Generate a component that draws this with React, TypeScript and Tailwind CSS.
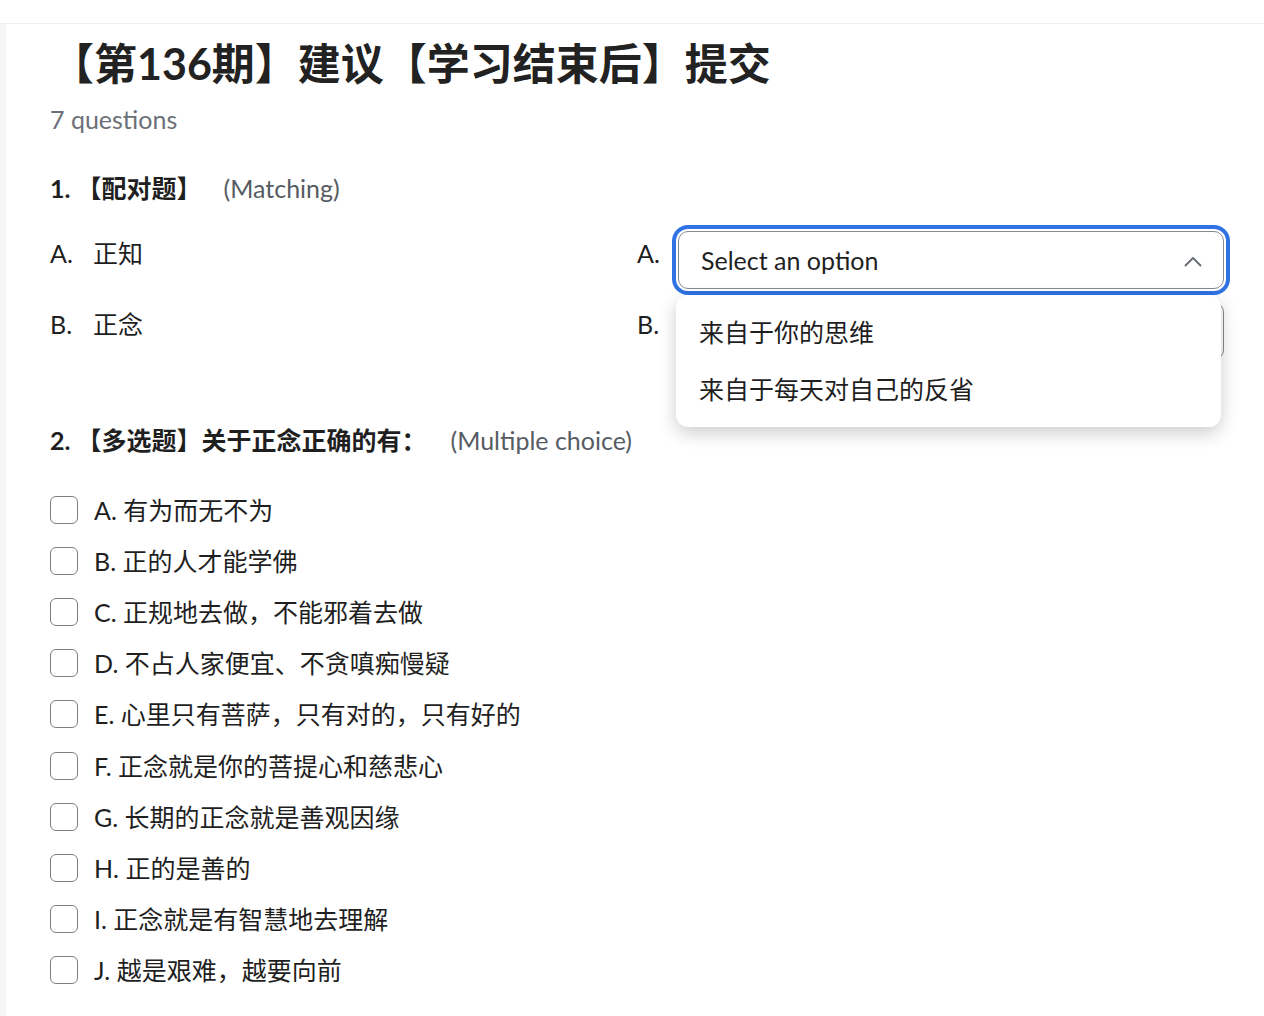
const font = { fontFamily: 'Lato, "Noto Sans CJK SC", sans-serif' };

const choices = [
  "A. 有为而无不为",
  "B. 正的人才能学佛",
  "C. 正规地去做，不能邪着去做",
  "D. 不占人家便宜、不贪嗔痴慢疑",
  "E. 心里只有菩萨，只有对的，只有好的",
  "F. 正念就是你的菩提心和慈悲心",
  "G. 长期的正念就是善观因缘",
  "H. 正的是善的",
  "I. 正念就是有智慧地去理解",
  "J. 越是艰难，越要向前",
];

function ChevronUp() {
  return (
    <svg width="18" height="11" viewBox="0 0 18 11" fill="none">
      <polyline
        points="1.5,9.5 9,2 16.5,9.5"
        stroke="#6b7078"
        strokeWidth="2"
        strokeLinecap="round"
        strokeLinejoin="round"
      />
    </svg>
  );
}

function SelectBox({ open }: { open?: boolean }) {
  return (
    <div className="relative">
      <div
        className={
          "flex h-[58px] w-[546px] items-center justify-between rounded-[10px] border border-[#868b93] bg-white pl-[22px] pr-[21px] pt-[2px] text-[25px] text-[#1f1f1f] " +
          (open ? "shadow-[0_0_0_2px_#ffffff,0_0_0_6px_#3072e3]" : "")
        }
      >
        <span>Select an option</span>
        {open ? <ChevronUp /> : null}
      </div>
      {open ? (
        <div className="absolute left-[-2px] top-[64px] z-10 w-[545px] rounded-[12px] bg-white py-[9px] shadow-[0_6px_18px_rgba(0,0,0,0.2)]">
          <div className="flex h-[57px] items-center px-[23px] text-[25px] text-[#1f1f1f]">
            来自于你的思维
          </div>
          <div className="flex h-[57px] items-center px-[23px] text-[25px] text-[#1f1f1f]">
            来自于每天对自己的反省
          </div>
        </div>
      ) : null}
    </div>
  );
}

function MatchRow({
  label,
  text,
  open,
}: {
  label: string;
  text: string;
  open?: boolean;
}) {
  return (
    <div className="flex h-[58px] items-start">
      <div className="flex w-[587px] pt-[7px] text-[25px] leading-[30px]">
        <span className="w-[43px]">{label}</span>
        <span>{text}</span>
      </div>
      <div className="w-[41px] pt-[7px] text-[25px] leading-[30px]">{label}</div>
      <SelectBox open={open} />
    </div>
  );
}

export default function App() {
  return (
    <div className="min-h-screen bg-white text-[#1f1f1f]" style={font}>
      <div className="h-6 border-b border-[#efefef]" />
      <div className="flex min-h-[992px]">
        <div className="w-[6px] bg-[#f5f6f8]" />
        <div className="flex-1 pl-[44px]">
          <h1 className="mt-[15px] pl-[1px] text-[43px] font-bold leading-[50px] text-[#222]">
            【第136期】建议【学习结束后】提交
          </h1>
          <div className="mt-[15px] text-[25px] leading-[30px] text-[#6c7078]">
            7 questions
          </div>

          <div className="mt-[39px] flex text-[25px] leading-[30px]">
            <span className="font-bold">1. 【配对题】</span>
            <span className="ml-[22px] text-[#575c63]">(Matching)</span>
          </div>

          <div className="mt-[28px] flex flex-col gap-[13px]">
            <MatchRow label="A." text="正知" open />
            <MatchRow label="B." text="正念" />
          </div>

          <div className="mt-[65px] flex text-[25px] leading-[30px]">
            <span className="font-bold">2. 【多选题】关于正念正确的有：</span>
            <span className="ml-[24px] text-[#575c63]">(Multiple choice)</span>
          </div>

          <div className="mt-[29px] flex flex-col">
            {choices.map((c) => (
              <label key={c} className="flex h-[51.2px] items-center gap-4">
                <span className="h-[28px] w-[28px] rounded-[6px] border border-[#7a7f87] bg-white" />
                <span className="text-[25px] leading-[30px]">{c}</span>
              </label>
            ))}
          </div>
        </div>
      </div>
    </div>
  );
}
